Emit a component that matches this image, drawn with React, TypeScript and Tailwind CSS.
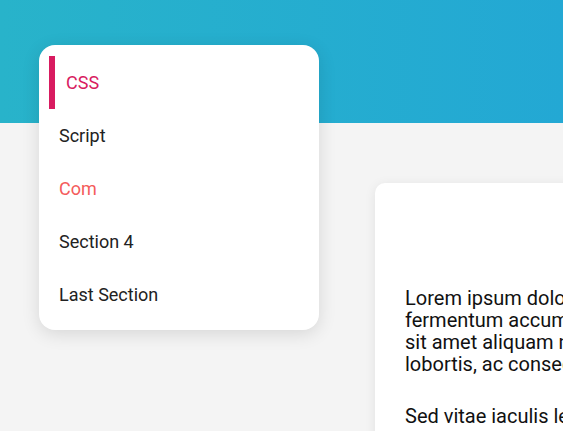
import React from "react";

const sections = [
  { id: "css", label: "CSS", state: "active" },
  { id: "script", label: "Script", state: "" },
  { id: "com", label: "Com", state: "hover" },
  { id: "s4", label: "Section 4", state: "" },
  { id: "last", label: "Last Section", state: "" },
];

export default function App() {
  return (
    <div
      className="relative h-screen w-full overflow-hidden bg-[#f4f4f4]"
      style={{ fontFamily: "Roboto, 'Liberation Sans', sans-serif" }}
    >
      <header className="h-[123px] w-full bg-gradient-to-r from-[#28b3ca] to-[#23a8d4]" />
      <div className="-mt-[78px] flex items-start pl-[39px]">
        <nav className="w-[280px] shrink-0 rounded-[16px] bg-white px-[10px] pt-[11px] pb-[9px] shadow-[0_4px_18px_rgba(0,0,0,0.12)]">
          <ul>
            {sections.map((s) => (
              <li
                key={s.id}
                className={
                  s.state === "active"
                    ? "flex h-[53px] items-center border-l-[6px] border-[#d81b60] pl-[11px] text-[18px] text-[#d81b60]"
                    : s.state === "hover"
                    ? "flex h-[53px] items-center pl-[10px] text-[18px] text-[#f45b5b]"
                    : "flex h-[53px] items-center pl-[10px] text-[18px] text-[#222]"
                }
              >
                {s.label}
              </li>
            ))}
          </ul>
        </nav>
        <main className="ml-[56px] mt-[138px] w-[900px] shrink-0 rounded-[10px] bg-white px-[30px] pt-[104px] pb-8 text-[20px] leading-[22px] text-[#111] shadow-[0_2px_12px_rgba(0,0,0,0.08)]">
          <p>
            Lorem ipsum dolor sit amet, consectetur adipiscing elit. Praesent
            <br />
            fermentum accumsan nisi, vitae ultrices sapien viverra at. Nullam
            <br />
            sit amet aliquam nulla. Duis consequat nisl eu lectus faucibus
            <br />
            lobortis, ac consectetur nunc rhoncus.
          </p>
          <p className="mt-[30px]">
            Sed vitae iaculis leo, nec porttitor turpis. Vivamus eget libero in magna.
          </p>
        </main>
      </div>
    </div>
  );
}
